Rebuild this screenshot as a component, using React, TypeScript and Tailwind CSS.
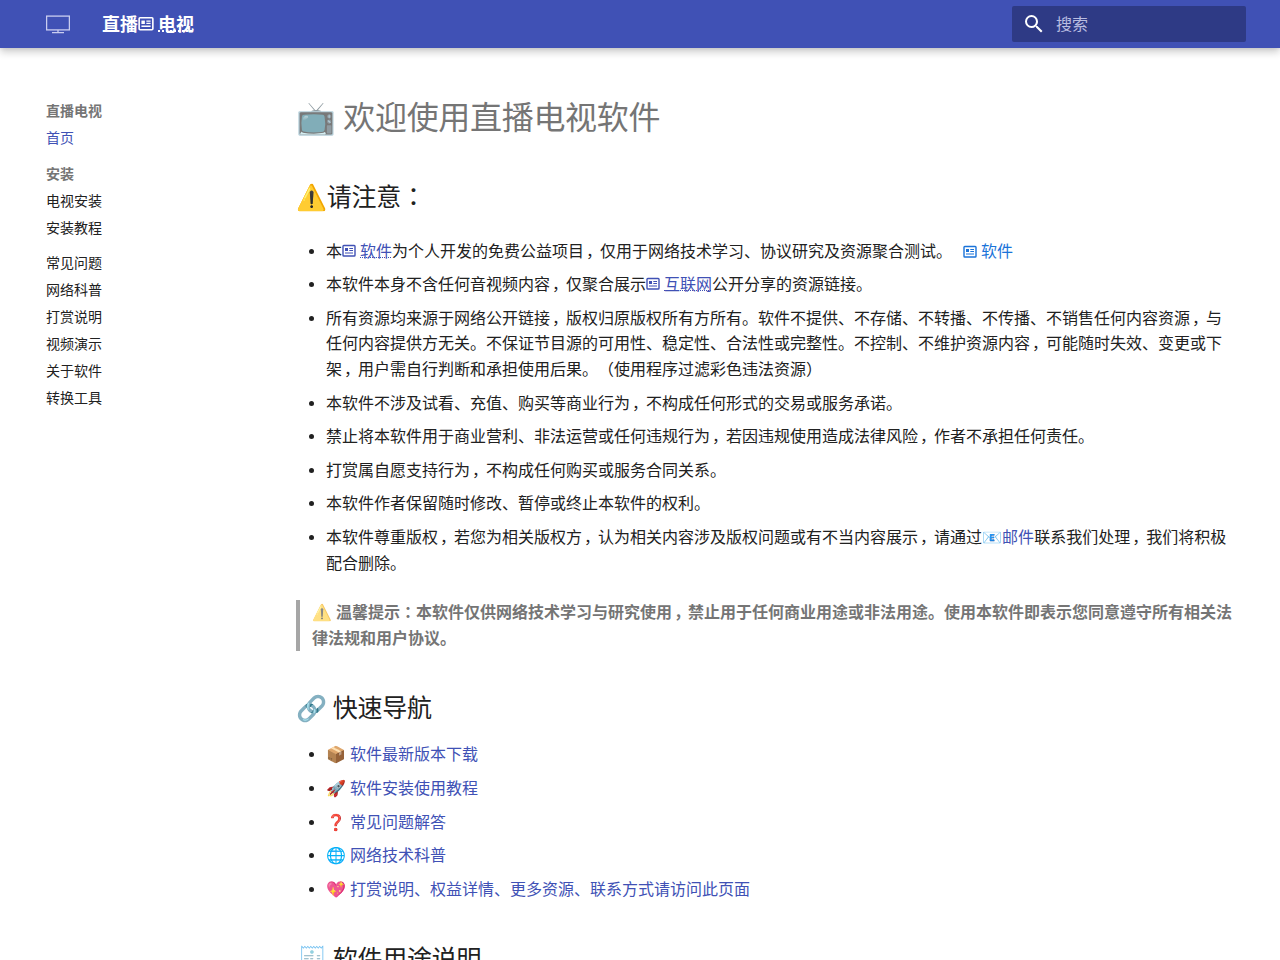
import React from 'react';

function AdIcon({ className = '' }: { className?: string }) {
  return (
    <svg viewBox="0 0 14 14" className={`inline-block ${className}`} fill="none" stroke="currentColor">
      <rect x="1" y="1.5" width="12" height="10.5" rx="0.8" strokeWidth="1.4" />
      <rect x="3" y="4" width="3" height="3" fill="currentColor" stroke="none" />
      <path d="M7.3 4.5h3.7M7.3 6.5h3.7M3 9h8" strokeWidth="1.2" />
    </svg>
  );
}

function Txt({ children }: { children: string }) {
  return (
    <>
      {children.split(/([，：])/).map((part, i) => {
        if (part === '，') return <span key={i} className="mr-[-2px] pl-[2px]">，</span>;
        if (part === '：') return <span key={i} lang="ja" className="font-['Noto_Sans_CJK_JP'] leading-none">：</span>;
        return part;
      })}
    </>
  );
}

function Term({ children }: { children: React.ReactNode }) {
  return (
    <span className="text-[#4051b5]">
      <AdIcon className="mr-1 size-3.5 align-[-1px]" />
      <span className="underline decoration-dotted decoration-1 underline-offset-0 [text-decoration-skip-ink:none]">{children}</span>
    </span>
  );
}

const quick = ['📦 软件最新版本下载', '🚀 软件安装使用教程', '❓ 常见问题解答', '🌐 网络技术科普', '💖 打赏说明、权益详情、更多资源、联系方式请访问此页面'];

const nav: [string, string][] = [
  ['直播电视', 'font-bold text-[#757575]'],
  ['首页', 'text-[#4051b5]'],
  ['安装', 'mt-[9px] font-bold text-[#757575]'],
  ['电视安装', ''],
  ['安装教程', ''],
  ['常见问题', 'mt-2'],
  ['网络科普', ''],
  ['打赏说明', ''],
  ['视频演示', ''],
  ['关于软件', ''],
  ['转换工具', ''],
];

export default function App() {
  return (
    <div className="h-[960px] overflow-hidden bg-white font-['Roboto','Noto_Sans_CJK_SC',sans-serif] text-[#212121] [text-spacing-trim:space-all]" lang="zh-CN">
      <header className="relative flex h-12 items-center bg-[#4051b5] pr-[34px] pl-[46px] text-white shadow-[0_0_4px_rgba(0,0,0,0.1),0_4px_8px_rgba(0,0,0,0.2)]">
        <svg viewBox="0 0 24 24" className="size-6" fill="none" stroke="#c9cdf0" strokeWidth="1.3">
          <rect x="0.6" y="4.1" width="22.8" height="13.8" />
          <path d="M12 18v2.5M6 20.6h12" />
        </svg>
        <div className="ml-8 flex-1 pt-px text-lg leading-7 font-bold">
          直播<AdIcon className="mr-1 size-4 align-[-1px]" />
          <span className="underline decoration-dotted decoration-2 underline-offset-0 [text-decoration-skip-ink:none]">电视</span>
        </div>
        <div className="flex h-9 w-[234px] items-center rounded-[2px] bg-[#2e3a85] pl-2.5">
          <svg viewBox="0 0 24 24" className="size-6" fill="currentColor">
            <path d="M9.5 3A6.5 6.5 0 0 1 16 9.5c0 1.61-.59 3.09-1.56 4.23l.27.27h.79l5 5-1.5 1.5-5-5v-.79l-.27-.27A6.516 6.516 0 0 1 9.5 16A6.5 6.5 0 0 1 3 9.5A6.5 6.5 0 0 1 9.5 3m0 2C7 5 5 7 5 9.5S7 14 9.5 14 14 12 14 9.5 12 5 9.5 5Z" />
          </svg>
          <span className="ml-2.5 pt-0.5 text-base text-[#b9bde0]">搜索</span>
        </div>
      </header>
      <div className="flex">
        <nav className="flex w-[296px] shrink-0 flex-col gap-[9px] pt-[54px] pl-[46px] text-sm leading-[18px]">
          {nav.map(([label, cls]) => (
            <div key={label} className={cls}>{label}</div>
          ))}
        </nav>
        <main className="w-[938px] shrink-0 pt-[50px] text-base leading-[25.6px]">
          <h1 className="text-[32px] leading-[41.6px] tracking-[-0.32px] text-[#757575]"><span className="opacity-60">📺</span> 欢迎使用直播电视软件</h1>
          <h2 className="mt-10 text-[25px] leading-[35px] tracking-[-0.25px]"><Txt>⚠️请注意：</Txt></h2>
          <ul className="mt-6 ml-[30px] flex list-disc flex-col gap-2">
            <li>本<Term>软件</Term><Txt>为个人开发的免费公益项目，仅用于网络技术学习、协议研究及资源聚合测试。</Txt><span className="ml-[11px] text-[#1a73d9]"><AdIcon className="mr-1 size-3.5 align-[-2px]" />软件</span></li>
            <li><Txt>本软件本身不含任何音视频内容，仅聚合展示</Txt><Term>互联网</Term>公开分享的资源链接。</li>
            <li><Txt>所有资源均来源于网络公开链接，版权归原版权所有方所有。软件不提供、不存储、不转播、不传播、不销售任何内容资源，与任何内容提供方无关。不保证节目源的可用性、稳定性、合法性或完整性。不控制、不维护资源内容，可能随时失效、变更或下架，用户需自行判断和承担使用后果。（使用程序过滤彩色违法资源）</Txt></li>
            <li><Txt>本软件不涉及试看、充值、购买等商业行为，不构成任何形式的交易或服务承诺。</Txt></li>
            <li><Txt>禁止将本软件用于商业营利、非法运营或任何违规行为，若因违规使用造成法律风险，作者不承担任何责任。</Txt></li>
            <li><Txt>打赏属自愿支持行为，不构成任何购买或服务合同关系。</Txt></li>
            <li>本软件作者保留随时修改、暂停或终止本软件的权利。</li>
            <li><Txt>本软件尊重版权，若您为相关版权方，认为相关内容涉及版权问题或有不当内容展示，请通过</Txt><span className="text-[#4051b5]">📧邮件</span><Txt>联系我们处理，我们将积极配合删除。</Txt></li>
          </ul>
          <blockquote className="mt-6 border-l-4 border-[#a6a6a6] pl-3 font-bold text-[#757575]"><span className="opacity-60">⚠️</span> <Txt>温馨提示：本软件仅供网络技术学习与研究使用，禁止用于任何商业用途或非法用途。使用本软件即表示您同意遵守所有相关法律法规和用户协议。</Txt></blockquote>
          <h2 className="mt-10 text-[25px] leading-[35px] tracking-[-0.25px]">🔗 快速导航</h2>
          <ul className="mt-4 ml-[30px] flex list-disc flex-col gap-2">
            {quick.map((t) => <li key={t}><span className="text-[#4051b5]">{t}</span></li>)}
          </ul>
          <h2 className="mt-10 text-[25px] leading-[35px] tracking-[-0.25px]">🧾 软件用途说明</h2>
        </main>
      </div>
    </div>
  );
}
